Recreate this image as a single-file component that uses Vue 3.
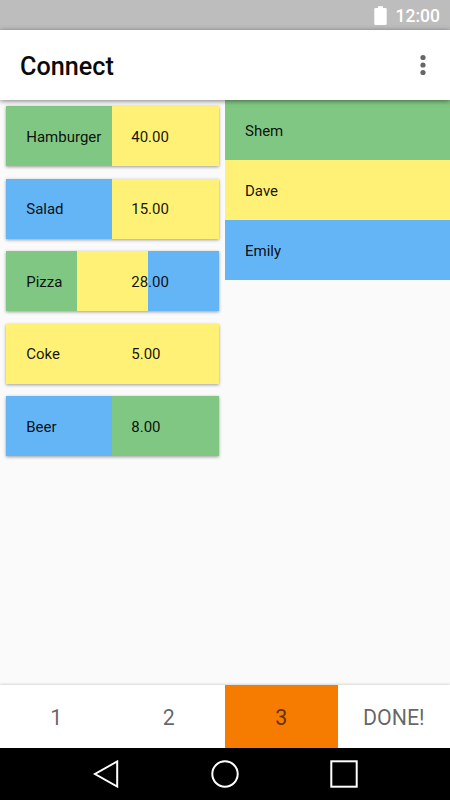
<template>
  <div class="screen">
    <div class="status-bar">
      <svg class="battery" width="13" height="19" viewBox="0 0 13 19">
        <path d="M0.3 3.2Q0.3 2 1.5 2H4V0.3H9V2H11.5Q12.7 2 12.7 3.2V17.8Q12.7 19 11.5 19H1.5Q0.3 19 0.3 17.8Z" fill="#fff" />
      </svg>
      <span class="clock">12:00</span>
    </div>

    <header class="toolbar">
      <h1 class="title">Connect</h1>
      <svg class="overflow" width="6" height="22" viewBox="0 0 6 22">
        <circle cx="3" cy="3.5" r="2.6" />
        <circle cx="3" cy="11" r="2.6" />
        <circle cx="3" cy="18.5" r="2.6" />
      </svg>
    </header>

    <main class="content">
      <ul class="items">
        <li
          v-for="item in items"
          :key="item.name"
          class="card"
          :style="{ background: stripes(item.people) }"
        >
          <span class="item-name">{{ item.name }}</span>
          <span>{{ item.price.toFixed(2) }}</span>
        </li>
      </ul>
      <ul class="people">
        <li
          v-for="(color, name) in people"
          :key="name"
          class="person"
          :style="{ background: color }"
        >
          {{ name }}
        </li>
      </ul>
    </main>

    <div class="steps">
      <button
        v-for="step in steps"
        :key="step"
        class="step"
        :class="{ active: step === current }"
        @click="current = step"
      >
        {{ step }}
      </button>
    </div>

    <nav class="nav-bar">
      <svg width="28" height="28" viewBox="0 0 28 28">
        <path d="M25.2 1.5V26.5L3 14Z" />
      </svg>
      <svg width="28" height="28" viewBox="0 0 28 28">
        <circle cx="14" cy="14" r="12.7" />
      </svg>
      <svg width="28" height="28" viewBox="0 0 28 28">
        <rect x="1.3" y="1.3" width="25.4" height="25.4" />
      </svg>
    </nav>
  </div>
</template>

<script setup>
import { ref } from 'vue'

const people = {
  Shem: '#81c784',
  Dave: '#fff176',
  Emily: '#64b5f6'
}

const items = [
  { name: 'Hamburger', price: 40, people: ['Shem', 'Dave'] },
  { name: 'Salad', price: 15, people: ['Emily', 'Dave'] },
  { name: 'Pizza', price: 28, people: ['Shem', 'Dave', 'Emily'] },
  { name: 'Coke', price: 5, people: ['Dave'] },
  { name: 'Beer', price: 8, people: ['Emily', 'Shem'] }
]

const steps = ['1', '2', '3', 'DONE!']
const current = ref('3')

// equal hard-edged stripe for each person sharing the item
function stripes(names) {
  const size = 100 / names.length
  const stops = names.map((n, i) => `${people[n]} ${i * size}% ${(i + 1) * size}%`)
  return `linear-gradient(to right, ${stops.join(', ')})`
}
</script>

<style>
body {
  background: #fafafa;
}
</style>

<style scoped>
.screen {
  display: flex;
  flex-direction: column;
  width: 450px;
  height: 800px;
  overflow: hidden;
  background: #fafafa;
  font-family: Roboto, sans-serif;
  color: rgba(0, 0, 0, 0.93);
}
.status-bar {
  display: flex;
  align-items: center;
  justify-content: flex-end;
  gap: 9px;
  height: 30px;
  padding-right: 10px;
  box-sizing: border-box;
  background: #bdbdbd;
  color: #fff;
}
.clock {
  font-size: 17.5px;
  font-weight: 500;
  line-height: 30px;
  padding-top: 2px;
}
.toolbar {
  display: flex;
  align-items: center;
  justify-content: space-between;
  height: 70px;
  padding: 0 24.5px 0 20px;
  box-sizing: border-box;
  background: #fff;
  box-shadow: 0 1px 5px rgba(0, 0, 0, 0.5);
  z-index: 1;
}
.title {
  margin: 0;
  padding-top: 2px;
  font-size: 25.2px;
  font-weight: 500;
  color: #0a0a0a;
}
.overflow {
  fill: #666;
}
.content {
  display: grid;
  grid-template-columns: 1fr 1fr;
  flex: 1;
  font-size: 15px;
}
.items,
.people {
  margin: 0;
  padding: 0;
  list-style: none;
}
.items {
  display: flex;
  flex-direction: column;
  gap: 12.5px;
  padding: 6.25px;
}
.card {
  display: flex;
  align-items: center;
  height: 60px;
  padding: 1px 20px 0;
  box-sizing: border-box;
  box-shadow: 0 1px 3px rgba(0, 0, 0, 0.38);
}
.item-name {
  width: 105px;
}
.person {
  display: flex;
  align-items: center;
  height: 60px;
  padding: 1px 20px 0;
  box-sizing: border-box;
}
.steps {
  display: flex;
  height: 62.5px;
  background: #fff;
  box-shadow: 0 0 3px rgba(0, 0, 0, 0.25);
}
.step {
  flex: 1;
  padding: 2px 0 0;
  border: 0;
  background: none;
  font: 400 21.4px Roboto, sans-serif;
  color: rgba(0, 0, 0, 0.62);
}
.active {
  background: #f57c00;
}
.nav-bar {
  display: flex;
  justify-content: center;
  align-items: center;
  gap: 91px;
  height: 52.5px;
  background: #000;
}
.nav-bar svg {
  fill: none;
  stroke: #fff;
  stroke-width: 2;
}
</style>
